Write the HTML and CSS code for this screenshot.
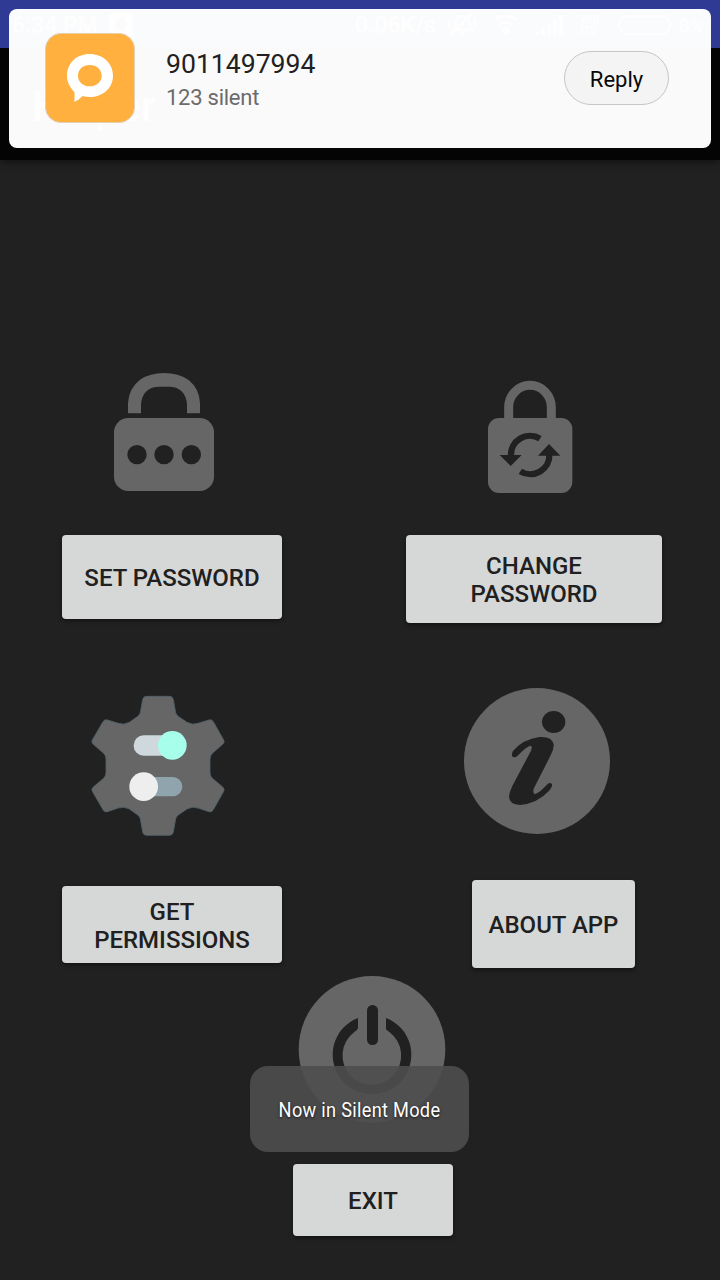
FILE: index.html
```html
<!DOCTYPE html>
<html lang="en">
<head>
<meta charset="utf-8">
<title>Helper</title>
<link rel="stylesheet" href="styles.css">
</head>
<body>
<div class="screen">
  <header class="header">
    <div class="status">
      <span class="time">6:34 PM</span>
      <svg class="app-mark" viewBox="0 0 24 24"><path fill="#fff" fill-rule="evenodd" d="M4 0H20Q24 0 24 4V20Q24 24 20 24H4Q0 24 0 20V4Q0 0 4 0ZM12 5a6 6 0 0 0-4 10l-1 4 4-2a6 6 0 1 0 1-12Z"/></svg>
      <span class="speed">0.06K/s</span>
      <svg class="tray" viewBox="0 0 128 26">
        <g fill="none" stroke="#fff" stroke-width="2.5"><path d="M6 18Q9 15 9 10Q10 4 15 4T22 10Q22 15 25 18ZM4 23L25 1M12 22h6M2 8v8M28 8v8"/><path d="M48 8Q59 0 70 8M52 13Q59 8 66 13"/></g>
        <circle cx="59" cy="18" r="4" fill="#fff"/>
        <path fill="#fff" d="M88 23v-3h4v3zM94 23v-7h4v7zM100 23v-11h4v11zM106 23V8h4v15zM112 23V3h4v20z"/>
      </svg>
      <span class="lte"><span>Vo))</span><span>LTE</span></span>
      <span class="battery"></span>
      <span class="level">8%</span>
    </div>
    <div class="appbar">Helper</div>
  </header>

  <main class="menu">
    <div class="row">
      <section class="tile left">
        <svg viewBox="36 0 660 525">
          <path fill="#666" d="M234 160V130Q236 85 270 59Q300 39 342 39Q386 39 416 60Q449 87 450 130V160H411V135Q410 108 394 93Q380 80 358 80H327Q304 80 290 93Q274 108 273 135V160Z"/>
          <rect x="192" y="174" width="300" height="219" rx="43" fill="#666"/>
          <g fill="#212121"><circle cx="261" cy="284" r="29"/><circle cx="342" cy="284" r="29"/><circle cx="424" cy="284" r="29"/></g>
        </svg>
        <button class="btn set">SET PASSWORD</button>
      </section>
      <section class="tile right">
        <svg viewBox="18 -30 768 525">
          <path fill="none" stroke="#666" stroke-width="27" d="M326 150V112A64 66 0 0 1 454 112V150"/>
          <rect x="264" y="144" width="253" height="225" rx="33" fill="#666"/>
          <g fill="none" stroke="#212121" stroke-width="19"><path d="M333 258A57 57 0 0 1 420 206"/><path d="M448 252A57 57 0 0 1 361 304"/></g>
          <path fill="#212121" d="M299 255H365L332 288ZM414 257H481L447 222Z"/>
        </svg>
        <button class="btn change">CHANGE<br>PASSWORD</button>
      </section>
    </div>

    <div class="row">
      <section class="tile left">
        <svg viewBox="36 0 660 618">
          <path fill="#666" stroke="#51636b" stroke-width="2.5" d="M290 49H358Q368 49 370 59L377 98Q379 105 386 110L411 127Q427 136 444 130L477 120Q485 117 490 125L521 180Q525 187 518 193L487 220Q480 227 480 237V278Q480 288 487 295L518 321Q525 327 521 334L490 389Q485 398 477 395L444 384Q427 378 411 387L386 404Q379 409 377 416L370 456Q368 466 358 466H290Q280 466 278 456L271 416Q269 409 262 404L238 387Q222 378 205 384L172 395Q164 398 159 389L127 334Q123 327 130 321L161 295Q168 288 168 278V237Q168 227 161 220L130 193Q123 187 127 180L159 125Q164 117 172 120L205 130Q222 136 238 127L262 110Q269 105 271 98L278 59Q280 49 290 49Z"/>
          <rect x="251" y="166" width="135" height="61" rx="30" fill="#cfd8dc"/>
          <rect x="270" y="291" width="127" height="58" rx="29" fill="#90a4ae"/>
          <circle cx="367" cy="196" r="43" fill="#a7ffeb"/>
          <circle cx="281" cy="320" r="43" fill="#eee"/>
        </svg>
        <button class="btn get">GET<br>PERMISSIONS</button>
      </section>
      <section class="tile right">
        <svg viewBox="-132 0 768 600">
          <circle cx="261" cy="243" r="219" fill="#666"/>
          <g fill="#212121"><ellipse cx="311" cy="126" rx="35" ry="33"/>
          <path d="M188 230Q183 224 189 213Q220 177 268 171Q306 168 311 193Q312 207 302 226L251 326Q248 342 256 342Q267 340 293 312Q300 306 306 312Q308 320 299 331Q262 371 210 375Q178 373 177 350Q178 336 187 318L243 212Q248 200 242 197Q232 197 202 228Q194 234 188 230Z"/></g>
        </svg>
        <button class="btn about">ABOUT APP</button>
      </section>
    </div>

    <section class="tile exit-tile">
      <svg viewBox="159 30 480 582">
        <circle cx="396" cy="268" r="220" fill="#666"/>
        <path fill="#212121" d="M354 174V205Q351 211 343 216A88 88 0 1 0 448 216Q441 211 438 208V174A118 118 0 1 1 354 174Z"/>
        <rect x="381" y="135" width="33" height="120" rx="16" fill="#212121"/>
      </svg>
      <button class="btn exit">EXIT</button>
    </section>
  </main>

  <aside class="notification">
    <svg class="chat" viewBox="0 0 270 270">
      <rect x="1" y="1" width="268" height="268" rx="48" fill="#ffb03f" stroke="#dfd2bd" stroke-width="3"/>
      <path fill="#fff" fill-rule="evenodd" d="M134 63C174 63 204 91 204 128S173 192 134 192Q123 192 113 189Q102 202 87 206Q90 196 88 177C75 163 66 148 66 128C66 91 94 63 134 63ZM134 96C113 96 99 110 99 128S113 160 134 160S170 146 170 128S155 96 134 96Z"/>
    </svg>
    <div class="message"><div class="sender">9011497994</div><div class="body">123 silent</div></div>
    <button class="reply">Reply</button>
  </aside>
  <div class="toast"><span>Now in Silent Mode</span></div>
</div>
</body>
</html>
```
FILE: styles.css
```css
* { box-sizing: border-box; }
body { margin: 0; background: #212121; font-family: Roboto, "Liberation Sans", sans-serif; }
button { font-family: inherit; margin: 0; padding: 0; }
svg { display: block; }
.screen { position: relative; width: 720px; height: 1280px; overflow: hidden; background: #212121; }
.header { height: 160px; color: #fff; background: #040404; box-shadow: 0 2px 8px rgba(0,0,0,.5); }
.status { height: 48px; padding: 2px 0 0 12px; display: flex; align-items: center; background: #2e3a94; font-size: 23px; font-weight: 500; white-space: nowrap; }
.time { width: 97px; }
.app-mark { width: 24px; height: 24px; }
.speed { margin-left: 222px; width: 92px; }
.tray { width: 128px; height: 26px; flex: none; }
.lte { width: 46px; padding-left: 5px; display: flex; flex-direction: column; font-size: 10px; line-height: 12px; font-weight: 700; }
.battery { width: 53px; height: 20px; flex: none; margin-left: -3px; border: 2px solid #fff; border-radius: 10px; }
.level { margin-left: 8px; font-size: 19px; }
.appbar { height: 112px; padding: 4px 0 0 32px; display: flex; align-items: center; font-size: 42px; font-weight: 500; }
.menu { padding-top: 200px; display: flex; flex-direction: column; }
.row { display: flex; padding-left: 62px; gap: 124px; align-items: flex-start; }
.row + .row { margin-top: 57px; }
.tile { display: flex; flex-direction: column; }
.left { width: 220px; }
.right { width: 256px; }
.exit-tile { width: 160px; margin: 2px 0 0 293px; }
.btn { padding-top: 2px; border: 0; border-radius: 4px; background: #d6d8d7; color: #202020; font-size: 24px; line-height: 28px; font-weight: 500; box-shadow: 0 2px 4px rgba(0,0,0,.45); white-space: nowrap; }
.set { height: 84px; }
.change { height: 88px; }
.get { height: 77px; }
.about { height: 88px; width: 163px; margin-left: 66px; }
.exit { height: 72px; }
.notification { position: absolute; left: 9px; top: 9px; width: 702px; height: 139px; padding: 0 42px 0 36px; display: flex; align-items: flex-start; border-radius: 8px; background: rgba(254,254,254,.985); }
.chat { width: 90px; height: 90px; margin-top: 24px; }
.message { margin: 39px 0 0 31px; flex: 1; }
.sender { font-size: 26.6px; line-height: 32px; color: #212121; }
.body { font-size: 22px; line-height: 28px; margin-top: 4px; color: #6b6b6b; letter-spacing: -.25px; }
.reply { width: 105px; height: 54px; margin-top: 42px; padding-top: 2px; border: 1px solid #c6c6c6; border-radius: 27px; background: #f4f4f4; color: #080808; font-size: 22px; }
.toast { position: absolute; left: 250px; top: 1066px; width: 219px; height: 86px; padding-top: 2px; border-radius: 18px; display: flex; align-items: center; justify-content: center; background: rgba(78,78,78,.9); color: #fff; font-size: 21px; letter-spacing: .35px; white-space: nowrap; text-shadow: 0 1px 3px rgba(0,0,0,.7); }
.toast span { transform: scaleX(.865); }
```
